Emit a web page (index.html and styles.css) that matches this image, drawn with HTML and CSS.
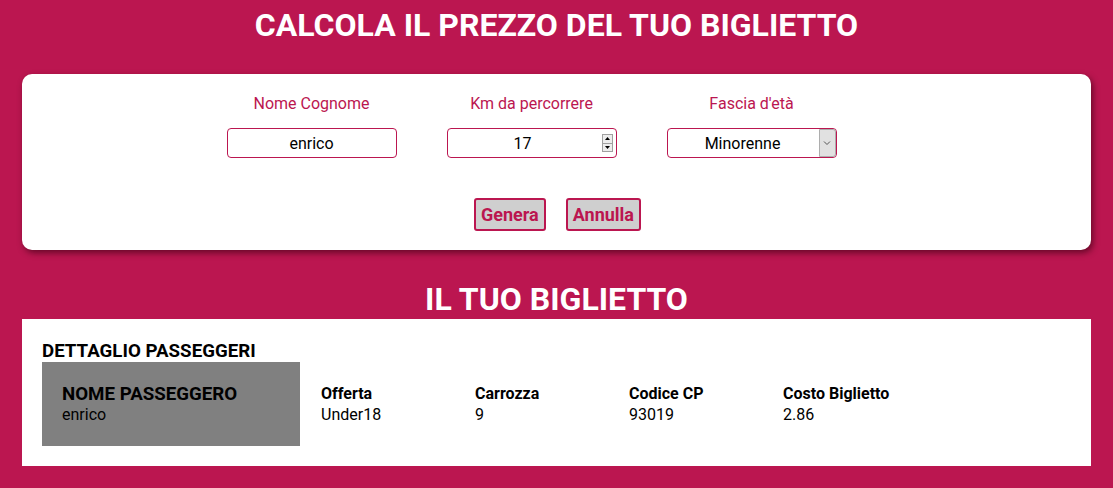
FILE: index.html
```html
<!DOCTYPE html>
<html lang="it">
<head>
<meta charset="utf-8">
<title>Biglietto</title>
<link rel="stylesheet" href="styles.css">
</head>
<body>
<h1 class="title">CALCOLA IL PREZZO DEL TUO BIGLIETTO</h1>
<div class="card">
  <div class="fields">
    <div class="field">
      <label class="label">Nome Cognome</label>
      <input class="input" type="text" value="enrico">
    </div>
    <div class="field">
      <label class="label">Km da percorrere</label>
      <div class="ctrl-wrap">
        <input class="input number" type="number" value="17">
        <span class="spin">
          <span class="spin-btn"><svg width="5" height="3" viewBox="0 0 5 3"><path d="M0 3 L2.5 0 L5 3 Z" fill="#000"/></svg></span>
          <span class="spin-btn"><svg width="5" height="3" viewBox="0 0 5 3"><path d="M0 0 L2.5 3 L5 0 Z" fill="#000"/></svg></span>
        </span>
      </div>
    </div>
    <div class="field">
      <label class="label">Fascia d'età</label>
      <div class="ctrl-wrap">
        <select class="input select"><option>Minorenne</option></select>
        <span class="arrow"><svg width="8" height="6" viewBox="0 0 8 6"><path d="M1 1.5 L4 4.5 L7 1.5" fill="none" stroke="#555" stroke-width="1"/></svg></span>
      </div>
    </div>
  </div>
  <div class="buttons">
    <button class="btn">Genera</button>
    <button class="btn">Annulla</button>
  </div>
</div>
<h2 class="subtitle">IL TUO BIGLIETTO</h2>
<div class="ticket">
  <h3 class="ticket-head">DETTAGLIO PASSEGGERI</h3>
  <div class="row">
    <div class="name-box">
      <div class="name-label">NOME PASSEGGERO</div>
      <div class="val">enrico</div>
    </div>
    <div class="col"><div class="col-label">Offerta</div><div class="val">Under18</div></div>
    <div class="col"><div class="col-label">Carrozza</div><div class="val">9</div></div>
    <div class="col"><div class="col-label">Codice CP</div><div class="val">93019</div></div>
    <div class="col"><div class="col-label">Costo Biglietto</div><div class="val">2.86</div></div>
  </div>
</div>
</body>
</html>
```
FILE: styles.css
```css
* { box-sizing: border-box; }
html, body { margin: 0; }
body {
  background: #bb1650;
  font-family: Roboto, "Liberation Sans", sans-serif;
  padding: 0 22px 22px;
  min-height: 488px;
}
.title {
  margin: 0;
  padding-top: 6px;
  height: 74px;
  color: #fff;
  font-size: 32px;
  font-weight: 700;
  text-align: center;
  line-height: 38px;
}
.card {
  background: #fff;
  border-radius: 10px;
  box-shadow: 2px 3px 6px rgba(60, 0, 20, 0.65);
  height: 176px;
  padding-top: 20px;
}
.fields {
  display: flex;
  justify-content: center;
  gap: 50px;
  padding-right: 50px;
}
.field {
  display: flex;
  flex-direction: column;
  align-items: center;
  width: 170px;
}
.label {
  color: #bb1650;
  font-size: 16px;
  line-height: 18px;
  margin-top: 1px;
  margin-bottom: 15px;
}
.input {
  width: 170px;
  height: 30px;
  border: 1px solid #bb1650;
  border-radius: 4px;
  background: #fff;
  font-family: Roboto, "Liberation Sans", sans-serif;
  font-size: 16px;
  text-align: center;
  color: #000;
  padding: 0 4px;
}
.number {
  padding: 0 18px 0 0;
  appearance: textfield;
  -moz-appearance: textfield;
}
.number::-webkit-inner-spin-button,
.number::-webkit-outer-spin-button {
  -webkit-appearance: none;
  margin: 0;
}
.ctrl-wrap {
  position: relative;
  width: 170px;
  height: 30px;
}
.spin {
  position: absolute;
  right: 4px;
  top: 6px;
  width: 11px;
  height: 18px;
  display: flex;
  flex-direction: column;
  border: 1px solid #a0a0a0;
  pointer-events: none;
}
.spin-btn {
  flex: 1;
  display: flex;
  align-items: center;
  justify-content: center;
  background: #ededed;
}
.spin-btn + .spin-btn { border-top: 1px solid #a0a0a0; }
.select {
  appearance: none;
  -webkit-appearance: none;
  text-align-last: center;
  padding: 0 18px 0 0;
}
.arrow {
  position: absolute;
  right: 1px;
  top: 1px;
  width: 17px;
  height: 28px;
  background: #e1e1e1;
  border: 1px solid #adadad;
  border-radius: 0 3px 3px 0;
  display: flex;
  align-items: center;
  justify-content: center;
  pointer-events: none;
}
.buttons {
  display: flex;
  justify-content: center;
  gap: 20px;
  margin-top: 40px;
  padding-left: 2px;
}
.btn {
  height: 33px;
  padding: 0 5px;
  background: #cfcfcf;
  border: 2px solid #bb1650;
  border-radius: 3px;
  color: #bb1650;
  font-family: Roboto, "Liberation Sans", sans-serif;
  font-weight: 700;
  font-size: 18px;
}
.subtitle {
  margin: 0;
  height: 69px;
  padding-top: 31px;
  color: #fff;
  font-size: 32px;
  font-weight: 700;
  text-align: center;
  line-height: 36px;
}
.ticket {
  background: #fff;
  height: 147px;
  padding: 21px 20px 0;
}
.ticket-head {
  margin: 0;
  font-size: 18.72px;
  line-height: 22px;
  font-weight: 700;
  color: #000;
}
.row {
  display: flex;
  align-items: center;
}
.name-box {
  width: 258px;
  height: 84px;
  background: #808080;
  padding: 21px 20px 0;
  margin-right: 21px;
}
.name-label {
  font-size: 18.72px;
  font-weight: 700;
  line-height: 22px;
  color: #000;
}
.val {
  font-size: 16px;
  line-height: 20px;
  color: #000;
}
.col {
  width: 154px;
}
.col-label {
  font-size: 16px;
  font-weight: 700;
  line-height: 22px;
  color: #000;
}
```
